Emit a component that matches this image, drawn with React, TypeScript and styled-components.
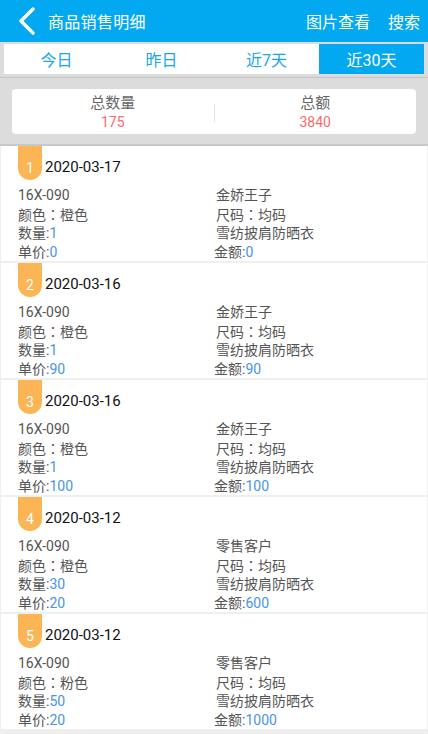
import React from "react";
import styled, { createGlobalStyle } from "styled-components";

const Global = createGlobalStyle`
  html, body { margin: 0; padding: 0; background: #efefef; }
  body { font-family: Roboto, "Noto Sans CJK SC", sans-serif; }
  * { box-sizing: border-box; }
`;

const Page = styled.div`
  width: 428px;
  height: 734px;
  overflow: hidden;
  display: flex;
  flex-direction: column;
  background: #efefef;
`;

const Header = styled.div`
  height: 42px;
  background: #03a9f0;
  display: flex;
  align-items: center;
  color: #fff;
  font-size: 16px;
  padding: 0 8px 0 18px;
`;

const Back = styled.div`
  width: 22px;
  height: 28px;
  display: flex;
  align-items: center;
  margin-right: 8px;
`;

const Title = styled.div`
  flex: 1;
  letter-spacing: 0.3px;
`;

const HeadAction = styled.div`
  margin-left: 18px;
`;

const TabWrap = styled.div`
  background: #dcdcdc;
  padding: 2px 4px 3px;
  border-bottom: 1px solid #c4c4c4;
`;

const Tabs = styled.div`
  display: grid;
  grid-template-columns: repeat(4, 1fr);
  height: 30px;
  background: #fff;
`;

const Tab = styled.div<{ $active?: boolean }>`
  display: flex;
  align-items: center;
  justify-content: center;
  font-size: 16px;
  color: ${(p) => (p.$active ? "#fff" : "#1aa5ee")};
  background: ${(p) => (p.$active ? "#03a9f0" : "#fff")};
`;

const SummaryWrap = styled.div`
  background: #dcdcdc;
  padding: 11px 12px 10px;
  border-bottom: 2px solid #c8c8c8;
`;

const Summary = styled.div`
  height: 45px;
  background: #fff;
  border-radius: 4px;
  display: grid;
  grid-template-columns: 1fr 1px 1fr;
  align-items: center;
`;

const SumCell = styled.div`
  display: flex;
  flex-direction: column;
  align-items: center;
  line-height: 19px;
  padding-top: 3px;
`;

const SumLabel = styled.div`
  font-size: 15px;
  color: #666;
`;

const SumValue = styled.div`
  font-size: 14px;
  color: #f56c6c;
`;

const Divider = styled.div`
  width: 1px;
  height: 18px;
  margin-top: 2px;
  background: #e2e2e2;
`;

const List = styled.div`
  display: flex;
  flex-direction: column;
  gap: 2px;
  padding: 0 1px;
`;

const Item = styled.div`
  background: #fff;
  height: 115px;
  padding: 0 0 0 17px;
`;

const ItemHead = styled.div`
  display: flex;
  align-items: flex-start;
  height: 40px;
`;

const Badge = styled.div`
  width: 24px;
  height: 34px;
  background: #fbb555;
  border-radius: 0 0 12px 12px;
  color: #fff;
  font-size: 14px;
  display: flex;
  align-items: flex-end;
  justify-content: center;
  padding-bottom: 4px;
  margin-right: 3px;
`;

const DateText = styled.div`
  font-size: 15px;
  font-weight: 400;
  color: #111;
  margin-top: 12px;
`;

const Grid = styled.div`
  display: grid;
  grid-template-columns: 198px 1fr;
  font-size: 14px;
  line-height: 18.5px;
  color: #555;
`;

const Cell = styled.div<{ $shift?: boolean }>`
  margin-left: ${(p) => (p.$shift ? "-2px" : "0")};
  white-space: nowrap;
`;

const Colon = styled.span`
  font-family: "Noto Sans CJK TC", sans-serif;
`;

const Val = styled.span`
  color: #4a94e4;
`;

type Row = {
  date: string;
  cust: string;
  color: string;
  qty: string;
  price: string;
  amount: string;
};

const rows: Row[] = [
  { date: "2020-03-17", cust: "金娇王子", color: "橙色", qty: "1", price: "0", amount: "0" },
  { date: "2020-03-16", cust: "金娇王子", color: "橙色", qty: "1", price: "90", amount: "90" },
  { date: "2020-03-16", cust: "金娇王子", color: "橙色", qty: "1", price: "100", amount: "100" },
  { date: "2020-03-12", cust: "零售客户", color: "橙色", qty: "30", price: "20", amount: "600" },
  { date: "2020-03-12", cust: "零售客户", color: "粉色", qty: "50", price: "20", amount: "1000" },
];

export default function App() {
  return (
    <Page>
      <Global />
      <Header>
        <Back>
          <svg width="18" height="28" viewBox="0 0 18 28">
            <path d="M15 2 L3 14 L15 26" fill="none" stroke="#fff" strokeWidth="3.4" strokeLinecap="round" strokeLinejoin="round" />
          </svg>
        </Back>
        <Title>商品销售明细</Title>
        <HeadAction>图片查看</HeadAction>
        <HeadAction>搜索</HeadAction>
      </Header>
      <TabWrap>
        <Tabs>
          <Tab>今日</Tab>
          <Tab>昨日</Tab>
          <Tab>近7天</Tab>
          <Tab $active>近30天</Tab>
        </Tabs>
      </TabWrap>
      <SummaryWrap>
        <Summary>
          <SumCell>
            <SumLabel>总数量</SumLabel>
            <SumValue>175</SumValue>
          </SumCell>
          <Divider />
          <SumCell>
            <SumLabel>总额</SumLabel>
            <SumValue>3840</SumValue>
          </SumCell>
        </Summary>
      </SummaryWrap>
      <List>
        {rows.map((r, i) => (
          <Item key={i}>
            <ItemHead>
              <Badge>{i + 1}</Badge>
              <DateText>{r.date}</DateText>
            </ItemHead>
            <Grid>
              <Cell>16X-090</Cell>
              <Cell>{r.cust}</Cell>
              <Cell>
                颜色<Colon>：</Colon>{r.color}
              </Cell>
              <Cell>
                尺码<Colon>：</Colon>均码
              </Cell>
              <Cell>
                数量:<Val>{r.qty}</Val>
              </Cell>
              <Cell>雪纺披肩防晒衣</Cell>
              <Cell>
                单价:<Val>{r.price}</Val>
              </Cell>
              <Cell $shift>
                金额:<Val>{r.amount}</Val>
              </Cell>
            </Grid>
          </Item>
        ))}
      </List>
    </Page>
  );
}
